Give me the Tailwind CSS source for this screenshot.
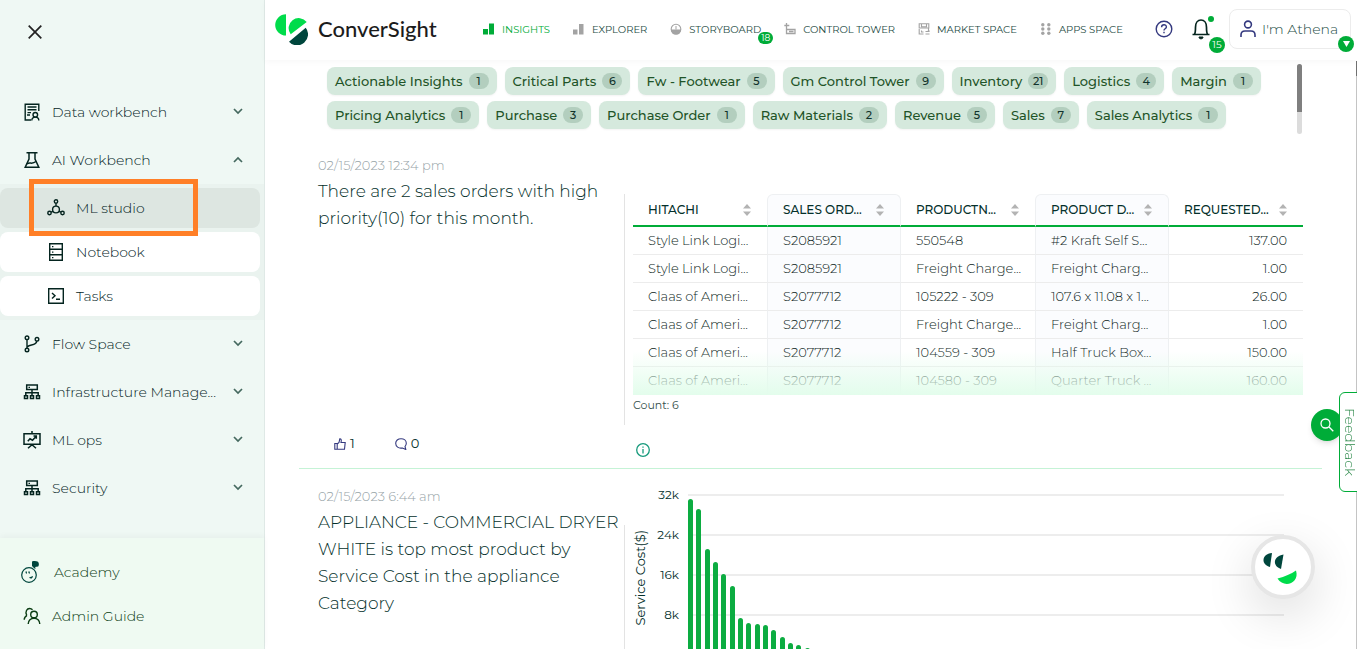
<!DOCTYPE html>
<html lang="en">
<head>
  <meta charset="UTF-8" />
  <meta name="viewport" content="width=device-width, initial-scale=1.0" />
  <title>ConverSight - Insights</title>
  <script src="https://cdn.jsdelivr.net/npm/@tailwindcss/browser@4"></script>
</head>
<body class="font-[Montserrat,Inter,sans-serif] bg-white text-[#04302b]">

<!-- icon sprite -->
<svg class="hidden">
  <symbol id="i-down" viewBox="0 0 10 10"><path d="M1 2l4 4 4-4" fill="none" stroke="#45695f" stroke-width="1.700"/></symbol>
  <symbol id="i-up" viewBox="0 0 10 10"><path d="M1 7l4-4 4 4" fill="none" stroke="#45695f" stroke-width="1.700"/></symbol>
  <symbol id="i-data" viewBox="0 0 18 18"><g fill="none" stroke="currentColor" stroke-width="1.4"><path d="M8 17H2.2V1.2h13.600V8M4.500 4h9M4.500 6.800h9M4.500 9.600h3.500M4 12h3"/><circle cx="12.300" cy="11.800" r="2.300"/><path d="M8.800 17.500c0-2.200 1.500-3.400 3.500-3.400s3.500 1.200 3.500 3.400"/></g></symbol>
  <symbol id="i-flask" viewBox="0 0 18 18"><g fill="none" stroke="currentColor" stroke-width="1.500"><path d="M3.500 1.700h11M6 2v6l-3.800 8.200h13.600L12 8V2"/><path d="M4 13c3-2.500 4.500 1 9-2.500"/></g></symbol>
  <symbol id="i-ml" viewBox="0 0 18 18"><g fill="none" stroke="currentColor" stroke-width="1.400"><circle cx="9" cy="2.500" r="1.700"/><circle cx="9" cy="10.500" r="3.400"/><circle cx="2.500" cy="14" r="1.700"/><circle cx="15.500" cy="14" r="1.700"/><path d="M9 4.200v2.900M6.100 12.300l-2.100.9M11.900 12.300l2.100.9"/></g></symbol>
  <symbol id="i-book" viewBox="0 0 18 18"><path d="M2.700.7h12.600v16.600H2.700zM2.700 6.200h12.600M2.700 11.800h12.600" fill="none" stroke="currentColor" stroke-width="1.400"/><path d="M5 3h1.400v1.200H5zM5 8.500h1.400v1.200H5zM5 14h1.400v1.200H5z" fill="currentColor"/></symbol>
  <symbol id="i-task" viewBox="0 0 18 18"><path d="M1.700 1.700h14.600v14.600H1.700zM5 6l3 2.800-3 2.800M9 12.200h4" fill="none" stroke="currentColor" stroke-width="1.400"/></symbol>
  <symbol id="i-flow" viewBox="0 0 18 18"><g fill="none" stroke="currentColor" stroke-width="1.400"><circle cx="4" cy="2.800" r="1.800"/><circle cx="4" cy="15" r="1.800"/><circle cx="14" cy="4.300" r="1.800"/><path d="M4 4.600v8.600M4.500 12c1-3 9-1 9.300-5.900"/></g></symbol>
  <symbol id="i-infra" viewBox="0 0 18 18"><g fill="none" stroke="currentColor" stroke-width="1.500"><path d="M3.700 2h10.600v4.600H3.700zM9 6.600v6M2.800 12.500V9.700h12.400v2.800"/><path d="M1.500 12.800h3v2.700h-3zM7.500 12.800h3v2.700h-3zM13.500 12.800h3v2.700h-3z"/></g><path d="M5.500 3.700H7v1.200H5.500z" fill="currentColor"/></symbol>
  <symbol id="i-ops" viewBox="0 0 18 18"><path d="M9 0v2.500M1 2.700h16v10.600H1zM5 17.300l4-3.500 4 3.500M4.800 10.300L7 7.800l2.500 1.400 3.700-4M10.500 5h2.800v2.700" fill="none" stroke="currentColor" stroke-width="1.500"/></symbol>
  <symbol id="i-academy" viewBox="0 0 20 22"><circle cx="9" cy="14" r="7.300" fill="none" stroke="currentColor" stroke-width="1.200"/><path d="M12 .5c2-.6 4.500-.5 6 .3 1.300 1.500 1 3.700.2 4.700l-3.200.6.900 1.500h-1.500L12 5z" fill="currentColor"/><path d="M5.500 10.500h1.400v2.300c-1 0-1.400-1-1.400-2.300zM8.300 10.500h1.500v2.300c-1 0-1.500-1-1.500-2.300zM9 16.500l4-1.500c0 2.500-2.500 3.500-4 1.500z" fill="currentColor"/></symbol>
  <symbol id="i-admin" viewBox="0 0 18 18"><g fill="none" stroke="currentColor" stroke-width="1.400"><path d="M3.700 8.300C1.800 4.500 4 1.500 6.600 1.500c1.200 0 2.200.5 2.900 1.300M4 8.300c-1.800 1-2.800 2.700-2.800 4.500"/><circle cx="11" cy="7.500" r="3.300"/><path d="M5.200 17c0-3.300 2.600-5.800 5.800-5.800s5.800 2.500 5.800 5.800"/></g></symbol>
</svg>

<div class="flex h-screen overflow-hidden">

  <!-- sidebar -->
  <aside class="w-[265px] shrink-0 bg-[#eff8f4] border-r border-[#dfe9e6] flex flex-col text-sm font-light text-[#04241f]">
    <button class="ml-7 mt-[25px] w-3.5 h-3.5" aria-label="Close menu">
      <svg viewBox="0 0 14 14" class="w-3.5 h-3.5"><path d="M.7.7l12.600 12.600M13.300.7L.7 13.300" stroke="#222" stroke-width="1.700"/></svg>
    </button>
    <nav class="mt-[49px]" id="menu"></nav>
    <div class="mt-auto bg-[#effaf2] pt-3 pb-[11px] shadow-[0_-2px_6px_rgba(0,0,0,0.04)] text-[#0c3d14]">
      <a href="#" class="flex items-center h-11 pl-5 gap-3.5"><svg class="w-5 h-[22px] text-[#00463d]"><use href="#i-academy"/></svg>Academy</a>
      <a href="#" class="flex items-center h-11 pl-[23px] gap-[11px]"><svg class="w-[18px] h-[18px]"><use href="#i-admin"/></svg>Admin Guide</a>
    </div>
  </aside>

  <main class="flex-1 min-w-0">
    <!-- top bar -->
    <header class="h-[60px] flex items-center pl-2.5 pr-1.5 shadow-[0_2px_6px_rgba(0,0,0,0.03)]">
      <a href="#" class="flex items-center gap-2.5 w-[208px] shrink-0 pb-0.5">
        <svg viewBox="0 0 33 31" class="w-[33px] h-[31px]">
          <path d="M11 .3V21.500A10.800 10.600 0 0 1 11 .3z" fill="#00dc4b"/>
          <path d="M15.700 20.300A10 10 0 0 1 31.700 8z" fill="#00dc4b"/>
          <path d="M30.700 13.700A10.900 10.900 0 0 1 14 27.700z" fill="#00463d"/>
        </svg>
        <span class="font-[Lato,sans-serif] font-medium text-[22px] leading-none text-[#1c1c1c]">ConverSight</span>
      </a>
      <nav class="flex items-center gap-[23px] pb-0.5 text-[10px] text-[#1c4a43] whitespace-nowrap">
        <a href="#" class="flex items-center gap-[7px] text-[#00ac38]">
          <svg viewBox="0 0 12 12" class="w-3 h-3" fill="#00ac38"><path d="M0 6h5v5.500H0zM6 .5h5v11H6z"/></svg>INSIGHTS</a>
        <a href="#" class="flex items-center gap-[7px]">
          <svg viewBox="0 0 12 12" class="w-3 h-3" fill="#a3a3a3"><path d="M0 6.500h4.500v5H0zM6 1h4.500v10.500H6z"/></svg>EXPLORER</a>
        <a href="#" class="flex items-center gap-[7px] relative">
          <svg viewBox="0 0 12 12" class="w-3 h-3"><circle cx="6" cy="6" r="4.800" fill="none" stroke="#a3a3a3" stroke-width="1.100"/><path d="M.8 6.500h10.400A5.200 5.200 0 0 1 .8 6.500z" fill="#a3a3a3"/><path d="M6 6.500V3" stroke="#a3a3a3"/></svg>STORYBOARD
          <span class="absolute -right-3 top-2.5 w-[15px] h-3 rounded-full bg-[#00ac38] text-white text-[9px] leading-3 text-center">18</span></a>
        <a href="#" class="flex items-center gap-[7px]">
          <svg viewBox="0 0 12 12" class="w-3 h-3" fill="none" stroke="#a3a3a3" stroke-width="1.300"><path d="M2.500 0v10.500h8.500V6.500H2.500M.3 2.500h5M5 8.500h4.500"/></svg>CONTROL TOWER</a>
        <a href="#" class="flex items-center gap-[7px]">
          <svg viewBox="0 0 12 12" class="w-3 h-3" fill="none" stroke="#a3a3a3" stroke-width="1.100"><path d="M5.500 11H1.200V6M1.200.8h9.600V5H1.200zM3.500.8v3h5v-3M10.500 5v2M7.500 8.500h4M10 7l1.500 1.500M11.500 11h-4M3.500 7.500v1.500h2"/></svg>MARKET SPACE</a>
        <a href="#" class="flex items-center gap-[7px]">
          <svg viewBox="0 0 12 12" class="w-3 h-3" fill="#a3a3a3"><circle cx="2.800" cy="1.800" r="1.700"/><circle cx="8.800" cy="1.800" r="1.700"/><circle cx="2.800" cy="6" r="1.700"/><circle cx="8.800" cy="6" r="1.700"/><circle cx="2.800" cy="10.200" r="1.700"/><circle cx="8.800" cy="10.200" r="1.700"/></svg>APPS SPACE</a>
      </nav>
      <div class="ml-auto flex items-center shrink-0 pb-0.5">
        <button aria-label="Help" class="mr-[18px]">
          <svg viewBox="0 0 18 18" class="w-[18px] h-[18px]" fill="none" stroke="#34397f" stroke-width="1.400"><circle cx="9" cy="9" r="7.800"/><path d="M6.600 7.200C6.600 4 11.400 4 11.400 7c0 1.800-2.400 1.800-2.400 3.500M9 11.800v1.500"/></svg>
        </button>
        <button aria-label="Notifications" class="relative mr-[18px]">
          <svg viewBox="0 0 20 22" class="w-5 h-[22px]" fill="none" stroke="#06261f" stroke-width="1.700"><path d="M1.500 16.500h17M3.500 16.200c1-1.500 1-3 1-7C4.500 5 6.700 2 10 2s5.500 3 5.500 7.200c0 4 0 5.500 1 7"/><path d="M8 19h4c0 1.500-1 1.800-2 1.800S8 20.500 8 19z" fill="#06261f" stroke-width="1"/></svg>
          <span class="absolute left-[17px] -top-0.5 w-1.5 h-1.5 rounded-full bg-[#00ac38]"></span>
          <span class="absolute left-[18px] top-[19px] w-4 h-4 rounded-full bg-[#00ac38] text-white text-[10px] leading-4 text-center">15</span>
        </button>
        <button class="relative flex items-center gap-1.5 h-10 w-[122px] pl-2.5 border border-[#ececec] rounded-lg text-sm font-light text-[#1e4d45] whitespace-nowrap">
          <svg viewBox="0 0 16 18" class="w-4 h-[18px] shrink-0" fill="none" stroke="#34397f" stroke-width="1.600"><circle cx="8" cy="4.500" r="3.400"/><path d="M1 17v-2c0-2.500 1.500-4 4-4h6c2.500 0 4 1.500 4 4v2"/></svg>
          I'm Athena
          <span class="absolute -right-1 top-[26px] w-4 h-4 rounded-full bg-[#00ac38] flex items-center justify-center"><svg viewBox="0 0 6 5" class="w-[7px] h-1.5"><path d="M0 0h6L3 5z" fill="#fff"/></svg></span>
        </button>
      </div>
    </header>

    <!-- filters -->
    <div class="flex justify-between h-[79px] pt-1 pb-[5px] pl-[62px] pr-[55px]">
      <div id="chips" class="flex flex-wrap gap-x-2 gap-y-1.5 content-start w-[950px] pt-[3px]"></div>
      <div class="w-[5px] h-[70px] rounded-full bg-[#dcdcdc]"><div class="h-12 rounded-t-full bg-[#7f7f7f]"></div></div>
    </div>

    <!-- insight 1 -->
    <article class="ml-[34px] mr-[35px] pl-[19px] pr-[19px] pt-4 border-b border-[#c5f3d6]">
      <div class="grid grid-cols-[306px_1px_1fr]">
        <div>
          <p class="text-[13px] leading-5 mb-[3px] font-light text-[#97a4a8]">02/15/2023 12:34 pm</p>
          <h2 class="text-[17px] leading-[27px] font-light">There are 2 sales orders with high priority(10) for this month.</h2>
        </div>
        <div class="bg-[#e3e3e3] mt-[39px]"></div>
        <div class="mt-[39px] pl-2 pb-2.5 min-w-0">
          <div class="relative">
            <table class="w-full table-fixed border-separate border-spacing-0 text-[13px]">
              <thead><tr id="thead"></tr></thead>
              <tbody id="tbody" class="font-light text-[#0f1f1d]"></tbody>
            </table>
            <div class="absolute inset-x-0 bottom-0 h-11 bg-linear-to-b from-[#e3fdec]/0 to-[#e3fdec] pointer-events-none"></div>
          </div>
          <p class="text-[11px] leading-5 text-[#35504c]">Count: 6</p>
        </div>
      </div>
      <div class="grid grid-cols-[318px_1fr] h-[43px] text-[13px]">
        <div class="flex items-start pt-2 pl-4 gap-10">
          <button class="flex items-center gap-1 h-[22px]"><svg viewBox="0 0 12 12" class="w-3 h-3" fill="none" stroke="#34397f" stroke-width="1.100"><path d="M.8 5.500h2.400v5.700H.8zM3.200 6L5 4.500 5.800.8c1.500 0 1.800 1.300 1.200 3.700h4.200l-.7 6.700H3.200"/></svg>1</button>
          <button class="flex items-center gap-1 h-[22px]"><svg viewBox="0 0 12 12" class="w-3 h-3" fill="none" stroke="#34397f" stroke-width="1.100"><path d="M10.800 11.500L7.500 10C3.500 10.800.7 8.500.7 5.300.7 2.600 3 .8 6 .8s5.300 1.800 5.300 4.500c0 1.500-.6 2.400-1.300 3.200z"/></svg>0</button>
        </div>
        <button aria-label="Info" class="mt-[18px] w-3.5 h-3.5"><svg viewBox="0 0 14 14" class="w-3.5 h-3.5" fill="none" stroke="#179a7c" stroke-width="1.300"><circle cx="7" cy="7" r="6.300"/><path d="M7 6v4.500M7 3.400v1.400"/></svg></button>
      </div>
    </article>

    <!-- insight 2 -->
    <article class="ml-[34px] mr-[35px] pl-[19px] pr-[38px] pt-[17px]">
      <div class="grid grid-cols-[306px_1px_1fr] h-[200px]">
        <div>
          <p class="text-[13px] leading-5 mb-[3px] font-light text-[#97a4a8]">02/15/2023 6:44 am</p>
          <h2 class="text-[17px] leading-[27px] font-light">APPLIANCE - COMMERCIAL DRYER WHITE is top most product by Service Cost in the appliance Category</h2>
        </div>
        <div class="bg-[#e3e3e3] mt-[39px]"></div>
        <div class="flex -mt-[11px] text-xs">
          <div class="w-[31px] pb-1.5 flex items-center justify-center"><span class="[writing-mode:vertical-rl] rotate-180 text-[13px]">Service Cost($)</span></div>
          <div class="flex-1 relative">
            <div id="grid"></div>
            <div id="bars" class="absolute left-8 bottom-8 flex items-end justify-between w-[122px] h-40"></div>
          </div>
        </div>
      </div>
    </article>
  </main>
</div>

<!-- highlight frame -->
<div class="fixed left-[29px] top-[179px] w-[169px] h-[57px] border-5 border-[#ff7f27] pointer-events-none"></div>

<!-- page scrollbar -->
<div class="fixed right-0 top-[61px] bottom-0 w-px bg-[#c4c4c4]"><div class="h-[15px] bg-[#707070]"></div></div>

<!-- floating controls -->
<button aria-label="Search" class="fixed right-3.5 top-[409px] w-8 h-8 rounded-full bg-[#00ac38] shadow-md flex items-center justify-center">
  <svg viewBox="0 0 14 14" class="w-3.5 h-3.5" fill="none" stroke="#fff" stroke-width="1.300"><circle cx="5.500" cy="5.500" r="4.500"/><path d="M8.800 8.800l4.500 4.500"/></svg>
</button>
<button class="fixed -right-1 top-[392px] w-[22px] h-[100px] border border-[#00ac38] rounded-l-md bg-white flex items-center justify-center">
  <span class="[writing-mode:vertical-rl] text-sm leading-4 font-light text-[#2f8a4c]">Feedback</span>
</button>
<button aria-label="Athena assistant" class="fixed right-[42px] bottom-[50px] w-16 h-16 rounded-full border-4 border-[#e6e6e6] bg-white shadow-[0_16px_50px_rgba(0,0,0,0.14)]">
  <svg viewBox="0 0 56 56" class="w-14 h-14">
    <path d="M17 14L15 28C6 26 6 15 17 14z" fill="#00463d"/>
    <path d="M28.500 15.500L26 30C17 27 18 17 28.500 15.500z" fill="#00463d"/>
    <path d="M22.500 39.500C30 37.500 36 35 41 31.500C45 44 29 50 22.500 39.500z" fill="#00dc4b"/>
  </svg>
</button>

<script>
  const menu = [
    { icon: "i-data", name: "Data workbench" },
    { icon: "i-flask", name: "AI Workbench", items: [["i-ml", "ML studio"], ["i-book", "Notebook"], ["i-task", "Tasks"]] },
    { icon: "i-flow", name: "Flow Space" },
    { icon: "i-infra", name: "Infrastructure Manage..." },
    { icon: "i-ops", name: "ML ops" },
    { icon: "i-infra", name: "Security" },
  ];

  document.getElementById("menu").innerHTML = menu.map(m => `
    <button class="flex items-center w-full h-12 pl-[23px] pr-[21px] text-left">
      <svg class="w-[18px] h-[18px] mr-[11px]"><use href="#${m.icon}"/></svg>${m.name}
      <svg class="w-2.5 h-2.5 ml-auto"><use href="#${m.items ? "i-up" : "i-down"}"/></svg>
    </button>
    ${m.items ? `<div class="bg-[#eaf3ef] py-1 pr-1 flex flex-col gap-1">${m.items.map((s, i) => `
      <a href="#" class="flex items-center h-10 pl-[47px] gap-[11px] rounded-lg ${i === 0 ? "bg-[#dde6e1]" : "bg-white"}">
        <svg class="w-[18px] h-[18px]"><use href="#${s[0]}"/></svg>${s[1]}
      </a>`).join("")}</div>` : ""}`).join("");

  const chips = [["Actionable Insights", 1], ["Critical Parts", 6], ["Fw - Footwear", 5], ["Gm Control Tower", 9], ["Inventory", 21],
    ["Logistics", 4], ["Margin", 1], ["Pricing Analytics", 1], ["Purchase", 3], ["Purchase Order", 1], ["Raw Materials", 2],
    ["Revenue", 5], ["Sales", 7], ["Sales Analytics", 1]];

  document.getElementById("chips").innerHTML = chips.map(c => `
    <button class="flex items-center gap-1.5 h-7 px-2 rounded-lg bg-[#d5e9dd] shadow-xs text-[13px] font-medium text-[#1f5428]">
      <span class="pt-0.5">${c[0]}</span><span class="w-5 h-4 rounded-full bg-[#b3cebe] text-[11px] leading-4 text-center text-[#12332c]">${c[1]}</span>
    </button>`).join("");

  const cols = ["HITACHI", "SALES ORD...", "PRODUCTN...", "PRODUCT D...", "REQUESTED..."];
  const rows = [
    ["Style Link Logi...", "S2085921", "550548", "#2 Kraft Self S...", "137.00"],
    ["Style Link Logi...", "S2085921", "Freight Charge...", "Freight Charg...", "1.00"],
    ["Claas of Ameri...", "S2077712", "105222 - 309", "107.6 x 11.08 x 1...", "26.00"],
    ["Claas of Ameri...", "S2077712", "Freight Charge...", "Freight Charg...", "1.00"],
    ["Claas of Ameri...", "S2077712", "104559 - 309", "Half Truck Box...", "150.00"],
    ["Claas of Ameri...", "S2077712", "104580 - 309", "Quarter Truck ...", "160.00"],
  ];

  document.getElementById("thead").innerHTML = cols.map((c, i) => `
    <th class="h-[33px] p-0 pl-[15px] pr-4 text-left text-xs font-medium whitespace-nowrap border-b-2 border-b-[#00ac38] ${i % 2 ? "bg-[#fbfcfe] border-x border-t border-x-[#eef0f2] border-t-[#eef0f2] rounded-t-md" : ""}">
      <div class="flex items-center justify-between">${c}
        <svg viewBox="0 0 8 12" class="w-2 h-3 shrink-0" fill="#b3b3b3"><path d="M4 0l4 4.500H0zM4 12L0 7.500h8z"/></svg>
      </div>
    </th>`).join("");

  document.getElementById("tbody").innerHTML = rows.map(r => `<tr>${r.map((v, i) => `
    <td class="h-7 p-0 pl-[15px] border-b border-b-[#ececec] whitespace-nowrap ${i % 2 ? "bg-[#fbfcfe] border-x border-x-[#eef0f2]" : ""} ${i === 4 ? "text-right pr-4" : ""}">${v}</td>`).join("")}</tr>`).join("");

  document.getElementById("grid").innerHTML = ["32k", "24k", "16k", "8k"].map(l => `
    <div class="flex items-center h-10 gap-[9px]"><span class="w-[23px] text-right">${l}</span><div class="flex-1 h-0.5 bg-[#ededed]"></div></div>`).join("");

  // bar heights in px, 5px = 1k
  const bars = [155, 145, 105, 92, 80, 68, 36, 31, 30, 29, 24, 17, 11, 9, 6];
  document.getElementById("bars").innerHTML = bars.map(h => `<div class="w-[5px] rounded-t-sm bg-[#0cac41]" style="height:${h}px"></div>`).join("");
</script>
</body>
</html>
